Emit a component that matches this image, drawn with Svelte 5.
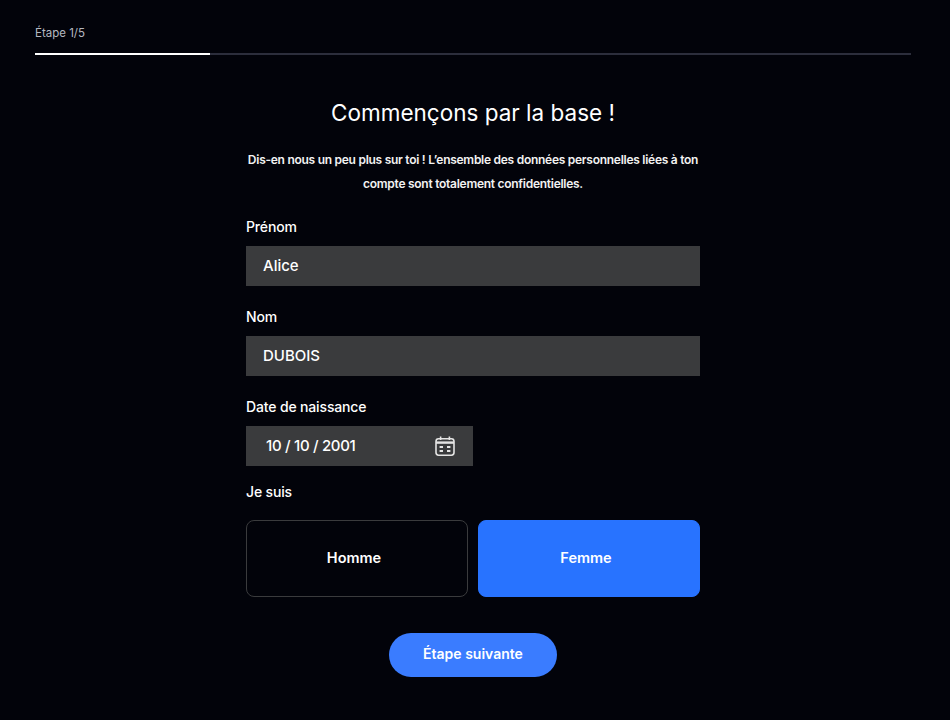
<script>
  let firstName = "Alice";
  let lastName = "DUBOIS";
  let birthDate = "10 / 10 / 2001";
  let gender = "Femme";
  const steps = 5;
  const currentStep = 1;
</script>

<div class="page">
  <div class="progress">
    <span class="step">Étape {currentStep}/{steps}</span>
    <div class="track">
      <div class="fill" style="width: {(currentStep / steps) * 100}%"></div>
    </div>
  </div>

  <form class="form" on:submit|preventDefault>
    <h1>Commençons par la base !</h1>
    <p class="subtitle">
      Dis-en nous un peu plus sur toi ! L’ensemble des données personnelles liées à ton compte sont totalement confidentielles.
    </p>

    <label class="label first" for="firstname">Prénom</label>
    <input id="firstname" class="input-field" type="text" bind:value={firstName} />

    <label class="label" for="lastname">Nom</label>
    <input id="lastname" class="input-field" type="text" bind:value={lastName} />

    <label class="label" for="birthdate">Date de naissance</label>
    <div class="date-field">
      <input id="birthdate" type="text" bind:value={birthDate} />
      <svg width="20" height="20" viewBox="0 0 20 20" fill="none" stroke="#e4e4e4" stroke-width="1.6" aria-hidden="true">
        <rect x="1" y="2.8" width="18" height="16.4" rx="2.6" />
        <path d="M1 6.6h18" stroke-width="2.4" />
        <path d="M5.6 .4v3.6M14.4 .4v3.6" />
        <path d="M4.6 11h3.4M12 11h3.4M4.6 15h3.4M12 15h3.4" stroke-width="2" />
      </svg>
    </div>

    <span class="label gender-label">Je suis</span>
    <div class="gender">
      <button type="button" class:selected={gender === "Homme"} on:click={() => (gender = "Homme")}>Homme</button>
      <button type="button" class:selected={gender === "Femme"} on:click={() => (gender = "Femme")}>Femme</button>
    </div>

    <button type="submit" class="btn-primary">Étape suivante</button>
  </form>
</div>

<style>
  :global(body) {
    background-color: #02030a;
    color: #fff;
    font-family: Inter, "Liberation Sans", sans-serif;
  }

  .page {
    height: 720px;
    box-sizing: border-box;
    padding: 0 39px 0 35px;
    overflow: hidden;
  }

  .progress {
    padding-top: 26px;
  }

  .step {
    display: block;
    height: 27px;
    font-size: 11.5px;
    line-height: 14px;
    color: #b4b8c0;
  }

  .track {
    height: 2px;
    background-color: #2c2e3c;
  }

  .fill {
    height: 100%;
    background-color: #fff;
  }

  .form {
    width: 454px;
    margin: 0 auto;
    display: flex;
    flex-direction: column;
  }

  h1 {
    margin: 43px 0 0;
    font-size: 22.5px;
    line-height: 30px;
    font-weight: 400;
    text-align: center;
  }

  .subtitle {
    margin: 20px 0 0;
    font-size: 12px;
    line-height: 24px;
    font-weight: 600;
    letter-spacing: -0.27px;
    text-align: center;
    color: #f2f2f2;
  }

  .label {
    margin-top: 21px;
    height: 20px;
    font-size: 14px;
    line-height: 20px;
    font-weight: 500;
    letter-spacing: -0.15px;
  }

  .label.first {
    margin-top: 21px;
  }

  .label + input,
  .label + .date-field {
    margin-top: 9px;
  }

  .input-field,
  .date-field input {
    border: none;
    outline: none;
    background: transparent;
    color: #fff;
    font-family: inherit;
    font-size: 15px;
    font-weight: 500;
  }

  .input-field {
    height: 40px;
    box-sizing: border-box;
    padding: 0 17px 1px;
    background-color: #3a3b3d;
  }

  .date-field {
    width: 227px;
    height: 40px;
    box-sizing: border-box;
    padding: 0 18px 0 20px;
    display: flex;
    align-items: center;
    background-color: #3a3b3d;
  }

  .date-field input {
    flex: 1;
    min-width: 0;
    padding: 0 0 2px;
    letter-spacing: -0.3px;
  }

  .gender-label {
    margin-top: 16px;
  }

  .gender {
    margin-top: 18px;
    display: grid;
    grid-template-columns: 1fr 1fr;
    gap: 10px;
  }

  .gender button {
    height: 77px;
    padding: 0 6px 2px 0;
    border: 1px solid #3a3b3d;
    border-radius: 8px;
    background-color: transparent;
    color: #fff;
    font-family: inherit;
    font-size: 14.5px;
    font-weight: 600;
  }

  .gender button.selected {
    border-color: #2873ff;
    background-color: #2873ff;
  }

  .btn-primary {
    align-self: center;
    margin-top: 36px;
    width: 168px;
    height: 44px;
    padding: 0 0 3px;
    border: none;
    border-radius: 22px;
    background-color: #3a7cff;
    color: #fff;
    font-family: inherit;
    font-size: 14px;
    font-weight: 600;
  }
</style>
